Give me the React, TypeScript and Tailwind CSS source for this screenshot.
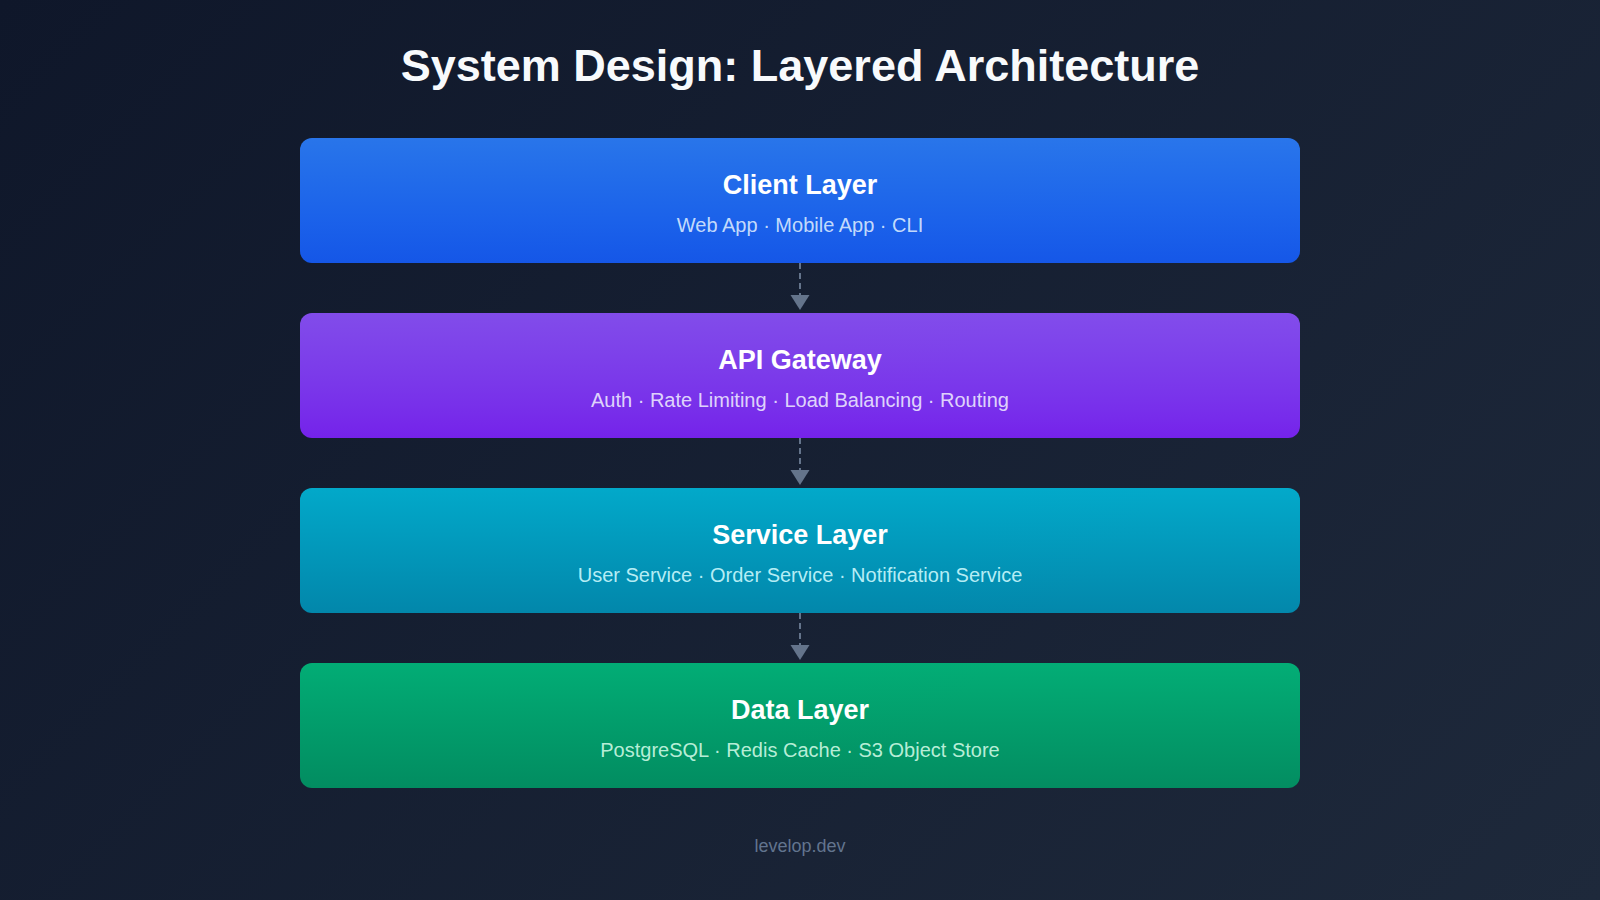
import React from "react";

type Layer = {
  title: string;
  items: string;
  bg: string;
  sub: string;
};

const layers: Layer[] = [
  {
    title: "Client Layer",
    items: "Web App · Mobile App · CLI",
    bg: "bg-gradient-to-b from-blue-500/90 to-blue-600/90",
    sub: "text-blue-100/90",
  },
  {
    title: "API Gateway",
    items: "Auth · Rate Limiting · Load Balancing · Routing",
    bg: "bg-gradient-to-b from-violet-500/90 to-violet-600/90",
    sub: "text-violet-100/90",
  },
  {
    title: "Service Layer",
    items: "User Service · Order Service · Notification Service",
    bg: "bg-gradient-to-b from-cyan-500/90 to-cyan-600/90",
    sub: "text-cyan-100/90",
  },
  {
    title: "Data Layer",
    items: "PostgreSQL · Redis Cache · S3 Object Store",
    bg: "bg-gradient-to-b from-emerald-500/90 to-emerald-600/90",
    sub: "text-emerald-100/90",
  },
];

function Arrow() {
  return (
    <div className="flex h-[50px] justify-center">
      <svg width="20" height="50" viewBox="0 0 20 50">
        <line
          x1="10"
          y1="0"
          x2="10"
          y2="33"
          stroke="#64748b"
          strokeWidth="2"
          strokeDasharray="6 4"
        />
        <polygon points="0.5,32 19.5,32 10,47" fill="#64748b" />
      </svg>
    </div>
  );
}

function Card({ layer }: { layer: Layer }) {
  return (
    <div
      className={`flex h-[125px] w-[1000px] flex-col items-center rounded-xl pt-[31px] ${layer.bg}`}
    >
      <div className="text-[27px] font-bold leading-[32px] text-white">{layer.title}</div>
      <div className={`mt-[10px] text-[20px] leading-[28px] ${layer.sub}`}>{layer.items}</div>
    </div>
  );
}

export default function App() {
  return (
    <div
      className="flex h-[900px] w-full flex-col items-center bg-[linear-gradient(135deg,#0f172a_0%,#1e293b_100%)] pt-[39px]"
      style={{ fontFamily: '"Liberation Sans", Arial, sans-serif' }}
    >
      <h1 className="text-[45px] font-bold leading-[54px] text-slate-50">
        System Design: Layered Architecture
      </h1>
      <div className="mt-[45px] flex flex-col items-center">
        {layers.map((l, i) => (
          <React.Fragment key={l.title}>
            {i > 0 && <Arrow />}
            <Card layer={l} />
          </React.Fragment>
        ))}
      </div>
      <div className="mt-[46px] text-[18px] leading-[24px] text-slate-500">levelop.dev</div>
    </div>
  );
}
